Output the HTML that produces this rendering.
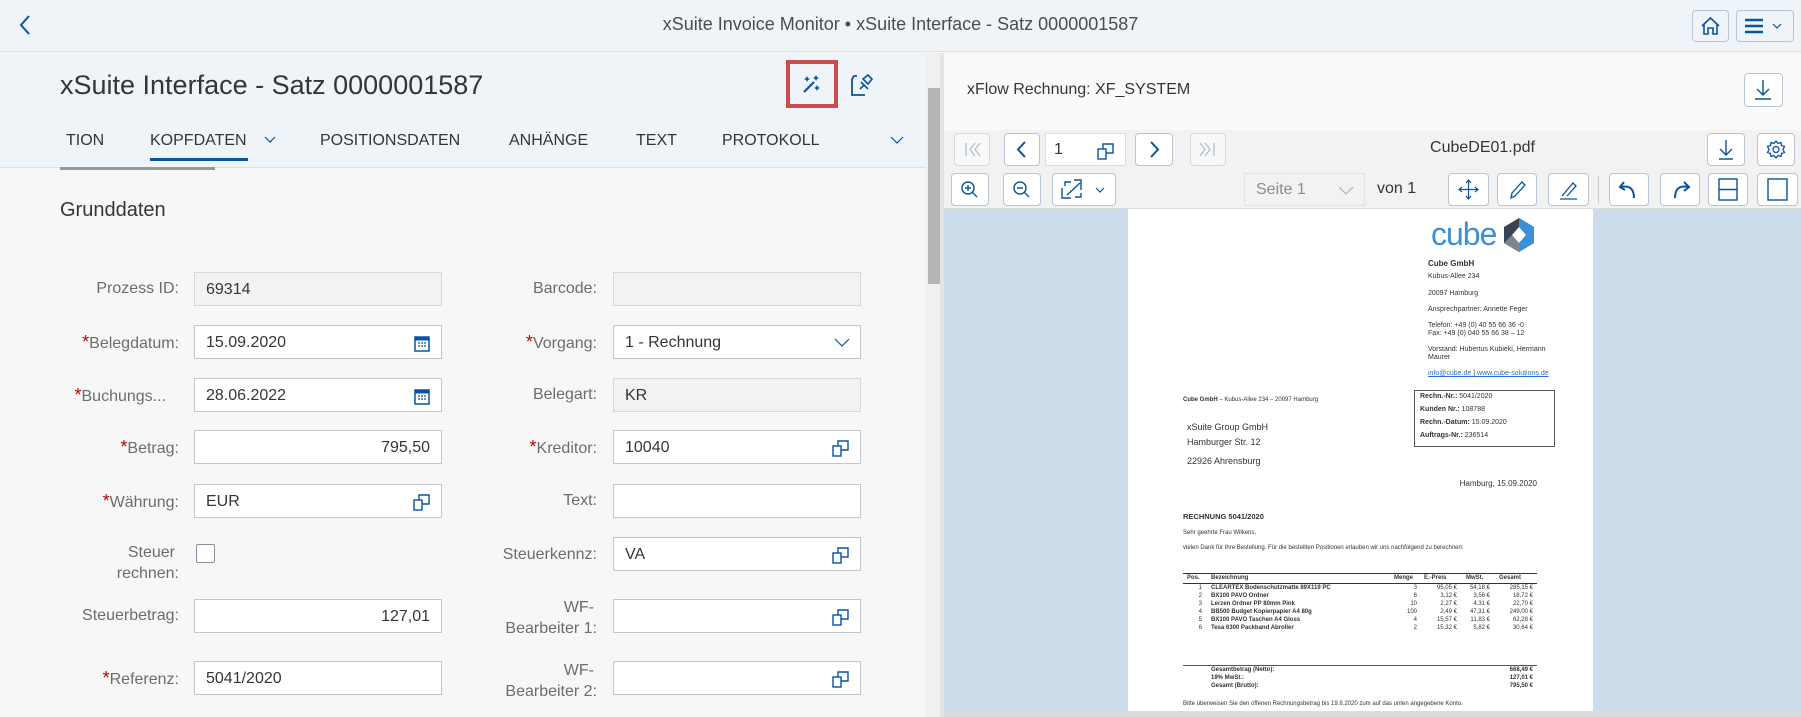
<!DOCTYPE html>
<html><head><meta charset="utf-8"><style>
*{box-sizing:border-box;margin:0;padding:0}
body{width:1801px;height:717px;overflow:hidden;font-family:"Liberation Sans",sans-serif;background:#f7f7f7;position:relative;color:#32363a}
.a{position:absolute}
.top{left:0;top:0;width:1801px;height:52px;background:#eff4f9;border-bottom:1px solid #d9e1ea}
.btn{position:absolute;background:#fff;border:1px solid #b8c4d1;border-radius:4px}
.lbl{position:absolute;font-size:16px;color:#6a6d70;text-align:right;width:170px;line-height:20px}
.lbl b{color:#bb0000;font-weight:normal;font-size:18px}
.inp{position:absolute;height:34px;border:1px solid #c4c7ca;background:#fff;font-size:16px;line-height:34px;padding-left:11px;color:#32363a}
.ro{background:#f2f2f2;border-color:#d5d7d9}
.ic{position:absolute;right:10px;top:8px}
.tab{position:absolute;top:132px;font-size:16px;color:#32363a}
.pdf{font-size:7px;color:#333;line-height:8px;white-space:nowrap}
.pdf .a{position:absolute}
.r{text-align:right}
</style></head><body>
<div class="a top"></div>
<svg class="a" style="left:18px;top:14px" width="14" height="22"><path d="M11 2 L3 11 L11 20" stroke="#0854a0" stroke-width="2" fill="none"/></svg>
<div class="a" style="left:0;width:1801px;top:14px;text-align:center;font-size:18px;color:#4a4d50">xSuite Invoice Monitor • xSuite Interface - Satz 0000001587</div>
<div class="btn" style="left:1692px;top:10px;width:37px;height:32px;background:#eff4f9"><svg width="35" height="30"><path d="M9 15 L17.5 7 L26 15 M11 13 V23 H15 V17 H20 V23 H24 V13" stroke="#0854a0" stroke-width="1.6" fill="none"/></svg></div>
<div class="btn" style="left:1736px;top:10px;width:58px;height:32px;background:#eff4f9"><svg width="56" height="30"><path d="M8 9 H26 M8 15 H26 M8 21 H26" stroke="#0854a0" stroke-width="2.5"/><path d="M36 13 L40 17 L44 13" stroke="#0854a0" stroke-width="1.2" fill="none"/></svg></div>

<div class="a" style="left:0;top:53px;width:926px;height:115px;background:#eff4f9;border-bottom:1px solid #d9e1ea"></div>
<div class="a" style="left:60px;top:70px;font-size:27px;color:#32363a">xSuite Interface - Satz 0000001587</div>
<div class="a" style="left:786px;top:60px;width:52px;height:48px;border:4px solid #cc4b4b"></div>
<svg class="a" style="left:800px;top:72px" width="24" height="24"><path d="M4 20 L14 10" stroke="#0854a0" stroke-width="2.2"/><path d="M7 4 l1 2 2 1 -2 1 -1 2 -1-2 -2-1 2-1z M16 3 l1 2 2 1 -2 1 -1 2 -1-2 -2-1 2-1z M17 13 l1 2 2 1 -2 1 -1 2 -1-2 -2-1 2-1z" fill="#0854a0"/></svg>
<svg class="a" style="left:849px;top:73px" width="26" height="26"><path d="M8 3 H5 L3 6 V22 H16" stroke="#0854a0" stroke-width="1.8" fill="none"/><path d="M11 16 L15 12 M14 6 L19 2 L23 6 L19 11 Z M12 9 L19 16" stroke="#0854a0" stroke-width="1.6" fill="none"/></svg>
<div class="tab" style="left:66px">TION</div>
<div class="tab" style="left:150px">KOPFDATEN</div>
<svg class="a" style="left:264px;top:136px" width="12" height="8"><path d="M1 1 L6 6 L11 1" stroke="#0854a0" stroke-width="1.2" fill="none"/></svg>
<div class="a" style="left:150px;top:158px;width:98px;height:3px;background:#0854a0"></div>
<div class="tab" style="left:320px">POSITIONSDATEN</div>
<div class="tab" style="left:509px">ANHÄNGE</div>
<div class="tab" style="left:636px">TEXT</div>
<div class="tab" style="left:722px">PROTOKOLL</div>
<svg class="a" style="left:890px;top:136px" width="14" height="9"><path d="M1 1 L7 7 L13 1" stroke="#0854a0" stroke-width="1.2" fill="none"/></svg>
<div class="a" style="left:60px;top:167px;width:155px;height:3px;background:#999"></div>
<div class="a" style="left:926px;top:53px;width:14px;height:664px;background:#f0f0f0"></div>
<div class="a" style="left:928px;top:88px;width:12px;height:196px;background:#b6b6b6"></div>

<div class="a" style="left:60px;top:199px;font-size:20px;color:#32363a">Grunddaten</div>

<div class="lbl" style="left:9px;top:279px">Prozess ID:</div>
<div class="inp ro" style="left:194px;top:272px;width:248px">69314</div>
<div class="lbl" style="left:427px;top:279px">Barcode:</div>
<div class="inp ro" style="left:613px;top:272px;width:248px"></div>

<div class="lbl" style="left:9px;top:332px"><b>*</b>Belegdatum:</div>
<div class="inp" style="left:194px;top:325px;width:248px">15.09.2020<svg class="ic" width="18" height="18"><rect x="2" y="3" width="14" height="14" fill="none" stroke="#0854a0" stroke-width="1.5"/><path d="M2 5 H16" stroke="#0854a0" stroke-width="3"/><path d="M5 9h2M8 9h2M11 9h2M5 12h2M8 12h2M11 12h2" stroke="#0854a0" stroke-width="1.2"/></svg></div>
<div class="lbl" style="left:427px;top:332px"><b>*</b>Vorgang:</div>
<div class="inp" style="left:613px;top:325px;width:248px">1 - Rechnung<svg class="ic" style="top:12px" width="16" height="10"><path d="M1 1 L8 8 L15 1" stroke="#0854a0" stroke-width="1.2" fill="none"/></svg></div>

<div class="lbl" style="left:-4px;top:385px"><b>*</b>Buchungs...</div>
<div class="inp" style="left:194px;top:378px;width:248px">28.06.2022<svg class="ic" width="18" height="18"><rect x="2" y="3" width="14" height="14" fill="none" stroke="#0854a0" stroke-width="1.5"/><path d="M2 5 H16" stroke="#0854a0" stroke-width="3"/><path d="M5 9h2M8 9h2M11 9h2M5 12h2M8 12h2M11 12h2" stroke="#0854a0" stroke-width="1.2"/></svg></div>
<div class="lbl" style="left:427px;top:385px">Belegart:</div>
<div class="inp ro" style="left:613px;top:378px;width:248px">KR</div>

<div class="lbl" style="left:9px;top:437px"><b>*</b>Betrag:</div>
<div class="inp" style="left:194px;top:430px;width:248px;text-align:right;padding-right:11px">795,50</div>
<div class="lbl" style="left:427px;top:437px"><b>*</b>Kreditor:</div>
<div class="inp" style="left:613px;top:430px;width:248px">10040<svg class="ic" width="18" height="18"><rect x="1" y="7" width="8" height="10" fill="none" stroke="#0854a0" stroke-width="1.4"/><path d="M6 7 V2 H16 V11 H9" stroke="#0854a0" stroke-width="1.4" fill="none"/></svg></div>

<div class="lbl" style="left:9px;top:491px"><b>*</b>Währung:</div>
<div class="inp" style="left:194px;top:484px;width:248px">EUR<svg class="ic" width="18" height="18"><rect x="1" y="7" width="8" height="10" fill="none" stroke="#0854a0" stroke-width="1.4"/><path d="M6 7 V2 H16 V11 H9" stroke="#0854a0" stroke-width="1.4" fill="none"/></svg></div>
<div class="lbl" style="left:427px;top:491px">Text:</div>
<div class="inp" style="left:613px;top:484px;width:248px"></div>

<div class="lbl" style="left:5px;top:543px">Steuer</div>
<div class="lbl" style="left:9px;top:564px">rechnen:</div>
<div class="a" style="left:196px;top:544px;width:19px;height:19px;border:1px solid #89919a;background:#fff;border-radius:2px"></div>
<div class="lbl" style="left:427px;top:545px">Steuerkennz:</div>
<div class="inp" style="left:613px;top:537px;width:248px">VA<svg class="ic" width="18" height="18"><rect x="1" y="7" width="8" height="10" fill="none" stroke="#0854a0" stroke-width="1.4"/><path d="M6 7 V2 H16 V11 H9" stroke="#0854a0" stroke-width="1.4" fill="none"/></svg></div>

<div class="lbl" style="left:9px;top:606px">Steuerbetrag:</div>
<div class="inp" style="left:194px;top:599px;width:248px;text-align:right;padding-right:11px">127,01</div>
<div class="lbl" style="left:424px;top:598px">WF-</div>
<div class="lbl" style="left:427px;top:619px">Bearbeiter 1:</div>
<div class="inp" style="left:613px;top:599px;width:248px"><svg class="ic" width="18" height="18"><rect x="1" y="7" width="8" height="10" fill="none" stroke="#0854a0" stroke-width="1.4"/><path d="M6 7 V2 H16 V11 H9" stroke="#0854a0" stroke-width="1.4" fill="none"/></svg></div>

<div class="lbl" style="left:9px;top:668px"><b>*</b>Referenz:</div>
<div class="inp" style="left:194px;top:661px;width:248px">5041/2020</div>
<div class="lbl" style="left:424px;top:661px">WF-</div>
<div class="lbl" style="left:427px;top:682px">Bearbeiter 2:</div>
<div class="inp" style="left:613px;top:661px;width:248px"><svg class="ic" width="18" height="18"><rect x="1" y="7" width="8" height="10" fill="none" stroke="#0854a0" stroke-width="1.4"/><path d="M6 7 V2 H16 V11 H9" stroke="#0854a0" stroke-width="1.4" fill="none"/></svg></div>

<div class="a" style="left:940px;top:53px;width:4px;height:664px;background:#e5e5e5"></div>
<div class="a" style="left:944px;top:53px;width:857px;height:77px;background:#fafafa"></div>
<div class="a" style="left:967px;top:81px;font-size:16px;color:#32363a">xFlow Rechnung: XF_SYSTEM</div>
<div class="btn" style="left:1744px;top:73px;width:39px;height:34px"><svg width="37" height="32"><path d="M18 6 V20 M12 15 L18 21 L24 15 M10 25 H26" stroke="#0854a0" stroke-width="1.4" fill="none"/></svg></div>
<div class="a" style="left:944px;top:130px;width:857px;height:79px;background:#f2f2f2;border-bottom:1px solid #ddd"></div>
<div class="btn" style="left:954px;top:133px;width:36px;height:33px;opacity:.5"><svg width="34" height="31"><path d="M11 9 V22 M20 9 L15 15.5 L20 22 M25 9 L20 15.5 L25 22" stroke="#6a8fb5" stroke-width="1.3" fill="none"/></svg></div>
<div class="btn" style="left:1004px;top:133px;width:36px;height:33px"><svg width="34" height="31"><path d="M20 8 L13 15.5 L20 23" stroke="#0854a0" stroke-width="2" fill="none"/></svg></div>
<div class="a" style="left:1045px;top:133px;width:81px;height:33px;background:#fff;border:1px solid #ddd;font-size:16px;line-height:31px;padding-left:8px">1<svg class="a" style="right:10px;top:8px" width="18" height="18"><rect x="1" y="7" width="8" height="10" fill="none" stroke="#0854a0" stroke-width="1.4"/><path d="M6 7 V2 H16 V11 H9" stroke="#0854a0" stroke-width="1.4" fill="none"/></svg></div>
<div class="btn" style="left:1135px;top:133px;width:38px;height:33px"><svg width="36" height="31"><path d="M15 8 L22 15.5 L15 23" stroke="#0854a0" stroke-width="2" fill="none"/></svg></div>
<div class="btn" style="left:1190px;top:133px;width:36px;height:33px;opacity:.5"><svg width="34" height="31"><path d="M23 9 V22 M14 9 L19 15.5 L14 22 M9 9 L14 15.5 L9 22" stroke="#6a8fb5" stroke-width="1.3" fill="none"/></svg></div>
<div class="a" style="left:1380px;top:139px;width:205px;text-align:center;font-size:16px;color:#32363a">CubeDE01.pdf</div>
<div class="btn" style="left:1707px;top:133px;width:38px;height:33px"><svg width="36" height="31"><path d="M18 6 V20 M12 15 L18 21 L24 15 M11 25 H25" stroke="#0854a0" stroke-width="1.4" fill="none"/></svg></div>
<div class="btn" style="left:1757px;top:133px;width:38px;height:33px"><svg width="36" height="31"><circle cx="18" cy="15.5" r="3" fill="none" stroke="#0854a0" stroke-width="1.3"/><path d="M18 7 l2 2.5 3-1 .5 3 3 1 -1.5 3 1.5 3 -3 1 -.5 3 -3 -1 -2 2.5 -2-2.5 -3 1 -.5-3 -3-1 1.5-3 -1.5-3 3-1 .5-3 3 1z" fill="none" stroke="#0854a0" stroke-width="1.3"/></svg></div>
<div class="btn" style="left:951px;top:173px;width:38px;height:33px"><svg width="36" height="31"><circle cx="16" cy="14" r="6" fill="none" stroke="#0854a0" stroke-width="1.4"/><path d="M13 14h6M16 11v6M20.5 18.5L25 23" stroke="#0854a0" stroke-width="1.4"/></svg></div>
<div class="btn" style="left:1003px;top:173px;width:38px;height:33px"><svg width="36" height="31"><circle cx="16" cy="14" r="6" fill="none" stroke="#0854a0" stroke-width="1.4"/><path d="M13 14h6M20.5 18.5L25 23" stroke="#0854a0" stroke-width="1.4"/></svg></div>
<div class="btn" style="left:1052px;top:173px;width:64px;height:33px"><svg width="62" height="31"><path d="M12 12 V8 H18 M22 23 H28 V19 M14 21 L27 9 M9 14 V24 H18 M28 16 V6 H21" stroke="#0854a0" stroke-width="1.4" fill="none"/><path d="M43 14 L47 18 L51 14" stroke="#0854a0" stroke-width="1.2" fill="none"/></svg></div>
<div class="a" style="left:1244px;top:173px;width:121px;height:33px;border:1px solid #e2e2e2;font-size:16px;color:#8a8c8e;line-height:31px;padding-left:11px">Seite 1<svg class="a" style="right:10px;top:12px" width="16" height="10"><path d="M1 1 L8 8 L15 1" stroke="#a5b3c2" stroke-width="1.2" fill="none"/></svg></div>
<div class="a" style="left:1377px;top:180px;font-size:16px;color:#32363a">von 1</div>
<div class="btn" style="left:1448px;top:173px;width:41px;height:33px"><svg width="39" height="31"><path d="M19.5 6 V25 M10 15.5 H29 M17 9 L19.5 6 22 9 M17 22 L19.5 25 22 22 M13 13 L10 15.5 13 18 M26 13 L29 15.5 26 18" stroke="#0854a0" stroke-width="1.2" fill="none"/></svg></div>
<div class="btn" style="left:1497px;top:173px;width:40px;height:33px"><svg width="38" height="31"><path d="M13 24 L14 19 L24 8 L27 11 L17 22 Z" stroke="#0854a0" stroke-width="1.3" fill="none"/></svg></div>
<div class="btn" style="left:1548px;top:173px;width:41px;height:33px"><svg width="39" height="31"><path d="M13 22 L24 9 L27 12 L18 22 M11 25 H28" stroke="#0854a0" stroke-width="1.3" fill="none"/></svg></div>
<div class="a" style="left:1598px;top:176px;width:1px;height:28px;background:#ccc"></div>
<div class="btn" style="left:1609px;top:173px;width:40px;height:33px"><svg width="38" height="31"><path d="M14 8 L10 13 L15 16 M10 13 C20 11 24 15 24 24" stroke="#0854a0" stroke-width="2" fill="none"/></svg></div>
<div class="btn" style="left:1660px;top:173px;width:40px;height:33px"><svg width="38" height="31"><path d="M23 8 L28 13 L23 17 M28 13 C18 11 14 15 14 24" stroke="#0854a0" stroke-width="2" fill="none"/></svg></div>
<div class="btn" style="left:1708px;top:173px;width:40px;height:33px"><svg width="38" height="31"><rect x="10" y="5" width="18" height="21" fill="none" stroke="#0854a0" stroke-width="1.4"/><path d="M10 15.5 H28" stroke="#0854a0" stroke-width="1.4"/></svg></div>
<div class="btn" style="left:1757px;top:173px;width:41px;height:33px"><svg width="39" height="31"><rect x="10" y="5" width="19" height="21" fill="none" stroke="#0854a0" stroke-width="1.4"/></svg></div>

<div class="a" style="left:944px;top:209px;width:857px;height:508px;background:#cddcea"></div>
<div class="a" style="left:944px;top:711px;width:857px;height:6px;background:#dcdcdc"></div>
<div class="a pdf" style="left:1128px;top:209px;width:465px;height:502px;background:#fff">
 <div class="a" style="left:303px;top:9px;font-size:32px;line-height:32px;color:#3d8fd6;letter-spacing:-1px">cube</div>
 <svg class="a" style="left:374px;top:8px" width="34" height="36"><path d="M17 1 L32 10 L32 26 L17 35 L2 26 L2 10 Z" fill="#3a4450"/><path d="M17 1 L32 10 L32 26 L17 35 L17 26 L24 18 L17 10 Z" fill="#3d8fd6"/><path d="M2 26 L17 35 L17 26 L10 18 Z" fill="#7c858e"/><path d="M17 10 L24 18 L17 26 L10 18 Z" fill="#fff"/></svg>
 <div class="a" style="left:300px;top:51px;font-weight:bold;font-size:8px">Cube GmbH</div>
 <div class="a" style="left:300px;top:64px">Kubus-Allee 234</div>
 <div class="a" style="left:300px;top:81px">20097 Hamburg</div>
 <div class="a" style="left:300px;top:97px">Ansprechpartner: Annette Feger</div>
 <div class="a" style="left:300px;top:113px">Telefon: +49 (0) 40 55 66 36 -0</div>
 <div class="a" style="left:300px;top:121px">Fax: +49 (0) 040 55 66 38 – 12</div>
 <div class="a" style="left:300px;top:137px">Vorstand: Hubertus Kubieki, Hermann</div>
 <div class="a" style="left:300px;top:145px">Maurer</div>
 <div class="a" style="left:300px;top:161px;color:#2a6fd0;text-decoration:underline">info@cube.de <span style="color:#333;text-decoration:none">|</span> www.cube-solutions.de</div>
 <div class="a" style="left:55px;top:187px;font-size:6px"><b>Cube GmbH</b> – Kubus-Allee 234 – 20097 Hamburg</div>
 <div class="a" style="left:286px;top:181px;width:141px;height:57px;border:1px solid #555"></div>
 <div class="a" style="left:292px;top:184px"><b>Rechn.-Nr.:</b> 5041/2020</div>
 <div class="a" style="left:292px;top:197px"><b>Kunden Nr.:</b> 108788</div>
 <div class="a" style="left:292px;top:210px"><b>Rechn.-Datum:</b> 15.09.2020</div>
 <div class="a" style="left:292px;top:223px"><b>Auftrags-Nr.:</b> 236514</div>
 <div class="a" style="left:59px;top:213px;font-size:9px;line-height:10px">xSuite Group GmbH</div>
 <div class="a" style="left:59px;top:228px;font-size:9px;line-height:10px">Hamburger Str. 12</div>
 <div class="a" style="left:59px;top:247px;font-size:9px;line-height:10px">22926 Ahrensburg</div>
 <div class="a r" style="left:280px;width:129px;top:271px;font-size:8px">Hamburg, 15.09.2020</div>
 <div class="a" style="left:55px;top:304px;font-weight:bold;font-size:7.5px">RECHNUNG 5041/2020</div>
 <div class="a" style="left:55px;top:320px;font-size:6px">Sehr geehrte Frau Wilkens,</div>
 <div class="a" style="left:55px;top:335px;font-size:6px">vielen Dank für Ihre Bestellung. Für die bestellten Positionen erlauben wir uns nachfolgend zu berechnen:</div>
 <div class="a" style="left:55px;top:364px;width:354px;height:1px;background:#333"></div>
 <div class="a" style="left:55px;top:374px;width:354px;height:1px;background:#333"></div>
 <div class="a" style="left:55px;top:365px;width:354px;font-size:6px;font-weight:bold">
  <span class="a" style="left:4px">Pos.</span><span class="a" style="left:28px">Bezeichnung</span><span class="a" style="left:211px">Menge</span><span class="a" style="left:241px">E.-Preis</span><span class="a" style="left:283px">MwSt.</span><span class="a" style="left:316px">Gesamt</span></div>
 <div class="a" style="left:55px;top:375px;width:354px;font-size:6px;line-height:8px">
  <div class="a r" style="left:0;width:19px">1<br>2<br>3<br>4<br>5<br>6</div>
  <div class="a" style="left:28px;font-weight:bold">CLEARTEX Bodenschutzmatte 89X119 PC<br>BX100 PAVO Ordner<br>Lerzen Ordner PP 80mm Pink<br>BB500 Budget Kopierpapier A4 80g<br>BX100 PAVO Taschen A4 Gloss<br>Tesa 6300 Packband Abroller</div>
  <div class="a r" style="left:200px;width:34px">3<br>6<br>10<br>100<br>4<br>2</div>
  <div class="a r" style="left:240px;width:34px">95,05 €<br>3,12 €<br>2,27 €<br>2,49 €<br>15,57 €<br>15,32 €</div>
  <div class="a r" style="left:273px;width:34px">54,18 €<br>3,56 €<br>4,31 €<br>47,31 €<br>11,83 €<br>5,82 €</div>
  <div class="a r" style="left:310px;width:40px">285,15 €<br>18,72 €<br>22,70 €<br>249,00 €<br>62,28 €<br>30,64 €</div>
 </div>
 <div class="a" style="left:55px;top:456px;width:354px;height:1px;background:#555"></div>
 <div class="a" style="left:83px;top:457px;font-size:6px;font-weight:bold;line-height:8px">Gesamtbetrag (Netto):<br>19% MwSt.:<br>Gesamt (Brutto):</div>
 <div class="a r" style="left:345px;width:60px;top:457px;font-size:6px;font-weight:bold;line-height:8px">668,49 €<br>127,01 €<br>795,50 €</div>
 <div class="a" style="left:55px;top:491px;font-size:6px">Bitte überweisen Sie den offenen Rechnungsbetrag bis 19.8.2020 zum auf das unten angegebene Konto.</div>
</div>
</body></html>
